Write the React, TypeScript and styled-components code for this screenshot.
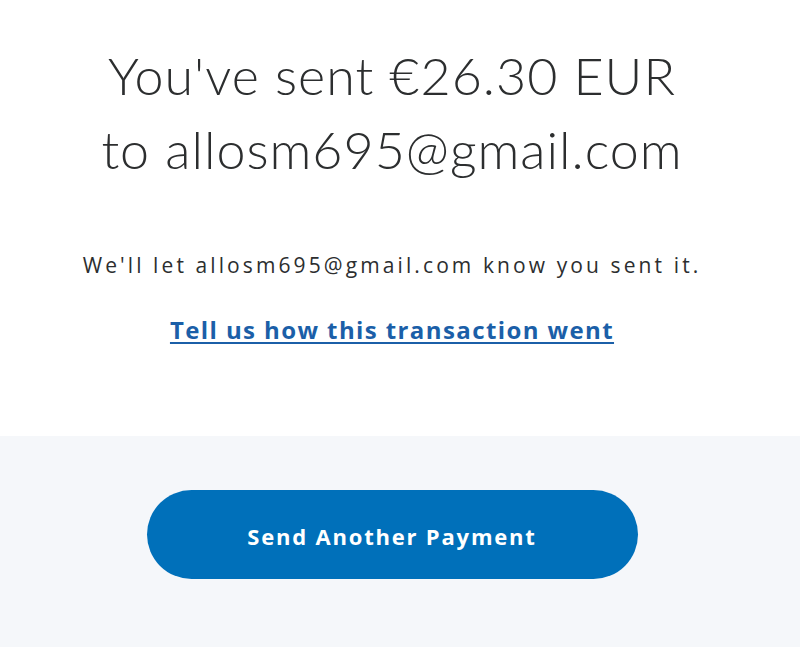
import styled, { createGlobalStyle } from 'styled-components';

const GlobalStyle = createGlobalStyle`
  html, body {
    margin: 0;
    padding: 0;
    background: #ffffff;
  }
  body {
    font-family: 'Open Sans', 'Noto Sans', sans-serif;
    color: #2c2e2f;
  }
`;

const Page = styled.div`
  display: flex;
  flex-direction: column;
  min-height: 647px;
  background: #f5f7fa;
`;

const Summary = styled.section`
  display: flex;
  flex-direction: column;
  align-items: center;
  height: 436px;
  box-sizing: border-box;
  padding: 38px 16px 0 0;
  background: #ffffff;
`;

const Heading = styled.h1`
  margin: 0;
  font-family: Lato, 'Open Sans', sans-serif;
  font-weight: 300;
  font-size: 52px;
  line-height: 74px;
  letter-spacing: 1px;
  text-align: center;
  color: #2c2e2f;
`;

const Notice = styled.p`
  margin: 65px 0 0;
  font-size: 21px;
  line-height: 28px;
  letter-spacing: 3.1px;
  color: #2c2e2f;
  text-align: center;
`;

const FeedbackLink = styled.a`
  margin-top: 35px;
  font-size: 24px;
  font-weight: 700;
  line-height: 32px;
  letter-spacing: 1.4px;
  color: #1b5fa8;
  text-decoration: underline;
  text-underline-offset: 3px;
  cursor: pointer;
`;

const Actions = styled.section`
  display: flex;
  justify-content: center;
  padding: 54px 16px 0 0;
`;

const PrimaryButton = styled.button`
  width: 491px;
  height: 89px;
  border: none;
  border-radius: 45px;
  background: #0070ba;
  color: #ffffff;
  font-family: 'Open Sans', 'Noto Sans', sans-serif;
  font-size: 22px;
  font-weight: 700;
  letter-spacing: 1.8px;
  padding-top: 4px;
  cursor: pointer;
`;

export default function App() {
  return (
    <>
      <GlobalStyle />
      <Page>
        <Summary>
          <Heading>
            You've sent €26.30 EUR
            <br />
            to allosm695@gmail.com
          </Heading>
          <Notice>We'll let allosm695@gmail.com know you sent it.</Notice>
          <FeedbackLink>Tell us how this transaction went</FeedbackLink>
        </Summary>
        <Actions>
          <PrimaryButton>Send Another Payment</PrimaryButton>
        </Actions>
      </Page>
    </>
  );
}
